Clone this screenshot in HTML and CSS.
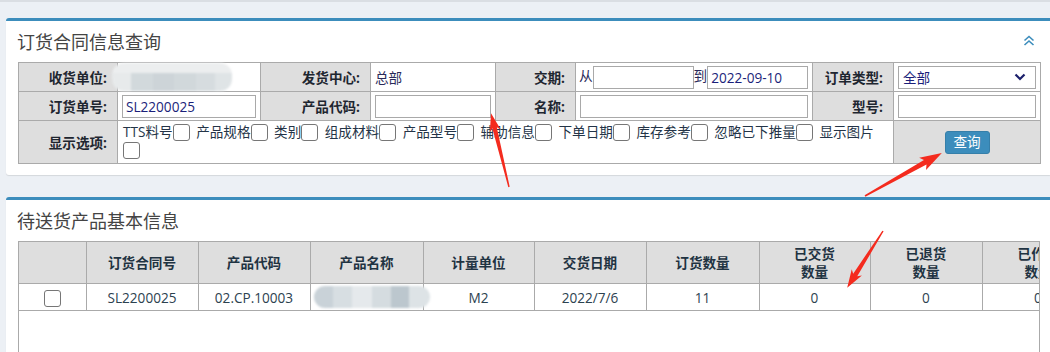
FILE: index.html
```html
<!DOCTYPE html>
<html lang="zh-CN">
<head>
  <meta charset="UTF-8" />
  <title>订货合同信息查询</title>
  <link rel="stylesheet" href="styles.css">
</head>
<body>

<div class="content">
  <div class="box">
    <div class="box-header">
      <h3 class="box-title">订货合同信息查询</h3>
      <svg class="collapse" width="12" height="11" viewBox="0 0 12 11">
        <path d="M1.5 5.5 6 1.5 10.5 5.5 M1.5 10 6 6 10.5 10" fill="none" stroke="#3c8dbc" stroke-width="1.6"/>
      </svg>
    </div>
    <div class="box-body">
      <table class="query">
        <colgroup>
          <col style="width:99px"><col style="width:143px"><col style="width:110px"><col style="width:125px">
          <col style="width:80px"><col style="width:237px"><col style="width:81px"><col style="width:147px">
        </colgroup>
        <tr>
          <td class="lbl">收货单位:</td>
          <td class="val masked"><span class="blur blur-a"></span></td>
          <td class="lbl">发货中心:</td>
          <td class="val">总部</td>
          <td class="lbl">交期:</td>
          <td class="val range">从<input class="date" type="text">到<input class="date" type="text" value="2022-09-10"></td>
          <td class="lbl">订单类型:</td>
          <td class="val">
            <div class="select">
              <span>全部</span>
              <svg width="12" height="8" viewBox="0 0 12 8"><path d="M1.5 1.5 6 6 10.5 1.5" fill="none" stroke="#1b1f6b" stroke-width="2.2"/></svg>
            </div>
          </td>
        </tr>
        <tr>
          <td class="lbl">订货单号:</td>
          <td class="val"><input class="full" type="text" value="SL2200025"></td>
          <td class="lbl">产品代码:</td>
          <td class="val"><input class="full" type="text"></td>
          <td class="lbl">名称:</td>
          <td class="val"><input class="full" type="text"></td>
          <td class="lbl">型号:</td>
          <td class="val"><input class="full" type="text"></td>
        </tr>
        <tr class="opt-row">
          <td class="lbl">显示选项:</td>
          <td class="options" colspan="6">TTS料号<input type="checkbox"> 产品规格<input type="checkbox"> 类别<input type="checkbox"> 组成材料<input type="checkbox"> 产品型号<input type="checkbox"> 辅助信息<input type="checkbox"> 下单日期<input type="checkbox"> 库存参考<input type="checkbox"> 忽略已下推量<input type="checkbox"> 显示图片<input type="checkbox"></td>
          <td class="action"><button class="btn">查询</button></td>
        </tr>
      </table>
    </div>
  </div>

  <div class="box">
    <div class="box-header list-header">
      <h3 class="box-title">待送货产品基本信息</h3>
    </div>
    <div class="box-body">
      <div class="grid">
        <table class="list">
          <colgroup>
            <col style="width:67px"><col style="width:112px"><col style="width:112px"><col style="width:113px">
            <col style="width:111px"><col style="width:112px"><col style="width:113px"><col style="width:111px">
            <col style="width:112px"><col style="width:112px">
          </colgroup>
          <thead>
            <tr>
              <th></th>
              <th>订货合同号</th>
              <th>产品代码</th>
              <th>产品名称</th>
              <th>计量单位</th>
              <th>交货日期</th>
              <th>订货数量</th>
              <th>已交货<br>数量</th>
              <th>已退货<br>数量</th>
              <th>已作废<br>数量</th>
            </tr>
          </thead>
          <tbody>
            <tr>
              <td><input type="checkbox"></td>
              <td>SL2200025</td>
              <td>02.CP.10003</td>
              <td class="masked"><span class="blur blur-b"></span></td>
              <td>M2</td>
              <td>2022/7/6</td>
              <td>11</td>
              <td>0</td>
              <td>0</td>
              <td>0</td>
            </tr>
          </tbody>
        </table>
      </div>
    </div>
  </div>
</div>

<svg class="marks" width="1050" height="352" viewBox="0 0 1050 352">
  <g fill="#f42b1e">
    <polygon transform="translate(509 187) rotate(-103.7)" points="0,-0.7 61,-2.3 58,-5.5 76,0 58,5.5 61,2.3 0,0.7"/>
    <polygon transform="translate(865 196) rotate(-29.2)" points="0,-0.8 69,-2.6 66,-7 88,0 66,7 69,2.6 0,0.8"/>
    <polygon transform="translate(883 231) rotate(122.3)" points="0,-0.7 52,-2.4 49,-6 67,0 49,6 52,2.4 0,0.7"/>
  </g>
</svg>

</body>
</html>
```

FILE: styles.css
```css
body {
  margin: 0;
  background: #ecf0f5;
  border-top: 2px solid #dadee3;
  font-family: "Open Sans", "Noto Sans CJK SC", sans-serif;
  font-size: 13.6px;
  color: #333;
  overflow: hidden;
}
.content {
  padding: 16px 0 0 6px;
}
.box {
  background: #fff;
  border-top: 3px solid #3c8dbc;
  border-radius: 3px 0 0 3px;
  box-shadow: 0 1px 1px rgba(0, 0, 0, 0.1);
  margin-bottom: 22px;
}
.box-header {
  display: flex;
  align-items: center;
  justify-content: space-between;
  padding: 9px 15px 8px 11px;
}
.list-header {
  padding-top: 9px;
}
.box-title {
  margin: 0;
  font-size: 18px;
  line-height: 24px;
  font-weight: normal;
  color: #444;
}
.collapse {
  margin-top: -4px;
}
.box-body {
  padding: 0 10px 11px 12px;
}

/* query form */
.query {
  border-collapse: collapse;
  table-layout: fixed;
  width: 1022px;
}
.query td {
  border: 1px solid #aaa;
  height: 28px;
  padding: 0 4px;
  vertical-align: middle;
  white-space: nowrap;
}
.query td.lbl {
  background: #dedede;
  font-weight: bold;
  color: #1e2630;
  text-align: right;
  padding-right: 10px;
}
.query td.val {
  color: #2a2a5a;
}
.masked {
  position: relative;
}
.blur {
  position: absolute;
  display: block;
  border-radius: 12px;
  filter: blur(1.2px);
}
.blur-a {
  left: -6px;
  top: 0;
  width: 120px;
  height: 28px;
  background:
    linear-gradient(#eceeef 0 35%, transparent 35%),
    linear-gradient(to right, #e7eaeb 0 16%, #d2d9dc 16% 34%, #cdd4d8 34% 52%, #d1d8db 52% 70%, #d6dcdf 70% 86%, #dfe4e6 86%);
}
.blur-b {
  left: 3px;
  top: 2px;
  width: 116px;
  height: 22px;
  background: linear-gradient(to right, #c9d2d8 0 16%, #d7dee2 16% 33%, #e5e9ec 33% 50%, #d5dce0 50% 66%, #bcc7ce 66% 82%, #dde3e6 82%);
}
input[type="text"] {
  box-sizing: border-box;
  height: 23px;
  border: 1px solid #a9a9a9;
  padding: 0 3px;
  font: inherit;
  color: #1b1f7a;
  vertical-align: middle;
  background: #fff;
}
input.full {
  width: 100%;
}
.query td.range {
  padding-left: 3px;
}
input.date {
  width: 101px;
}
.select {
  box-sizing: border-box;
  height: 23px;
  border: 1px solid #a9a9a9;
  display: flex;
  align-items: center;
  justify-content: space-between;
  padding: 0 9px 0 4px;
  color: #1b1f7a;
}
input[type="checkbox"] {
  appearance: none;
  box-sizing: border-box;
  width: 17px;
  height: 17px;
  margin: 1px 3px 0 0;
  border: 1px solid #767676;
  border-radius: 3px;
  background: #fff;
  vertical-align: top;
}
.query td.options {
  white-space: normal;
  line-height: 18px;
  padding: 2px 4px 4px 5px;
  vertical-align: top;
  color: #243447;
}
.query td.action {
  background: #dedede;
  text-align: center;
}
.btn {
  height: 23px;
  width: 45px;
  padding: 0;
  background: #3c8dbc;
  border: 1px solid #367fa9;
  border-radius: 3px;
  color: #fff;
  font: inherit;
  line-height: 20px;
}

/* result list */
.grid {
  border-left: 1px solid #aaa;
  border-right: 1px solid #aaa;
  height: 160px;
  overflow: hidden;
}
.list {
  border-collapse: collapse;
  table-layout: fixed;
  width: 1075px;
}
.list th,
.list td {
  border: 1px solid #aaa;
  text-align: center;
  padding: 0 4px;
  white-space: nowrap;
}
.list tr > :first-child {
  border-left: none;
}
.list th {
  background: #dedede;
  height: 41px;
  line-height: 18px;
  font-weight: bold;
  color: #1f3342;
}
.list td {
  height: 26px;
  color: #2c4250;
}
.list td input[type="checkbox"] {
  margin: 1px 0 0 0;
  vertical-align: middle;
}

.marks {
  position: absolute;
  top: 0;
  left: 0;
  pointer-events: none;
}
```
